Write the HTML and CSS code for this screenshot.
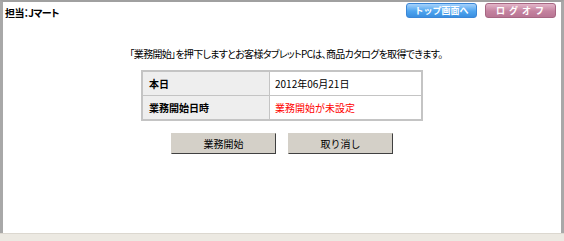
FILE: index.html
```html
<!DOCTYPE html>
<html>
  <head>
    <title>業務開始</title>
    <link rel="stylesheet" href="styles.css">
  </head>
  <body>
    <div class="frame">
      <div class="header">
        <div class="staff">担当：Jマート</div>
        <div class="navs">
          <a class="nav top" href="#">トップ画面へ</a>
          <a class="nav logoff" href="#">ロ グ オ フ</a>
        </div>
      </div>

      <p class="lead">「業務開始」を押下しますとお客様タブレットPCは、商品カタログを取得できます。</p>

      <table class="info">
        <tr>
          <th>本日</th>
          <td>2012年06月21日</td>
        </tr>
        <tr>
          <th>業務開始日時</th>
          <td class="warn">業務開始が未設定</td>
        </tr>
      </table>

      <div class="actions">
        <button class="btn">業務開始</button>
        <button class="btn">取り消し</button>
      </div>
    </div>
    <div class="status"></div>
  </body>
</html>
```

FILE: styles.css
```css
html, body { margin: 0; padding: 0; background: #ffffff; }
body { font: normal 10px "Noto Sans CJK JP", "Liberation Sans", sans-serif; color: #000000; width: 564px; height: 241px; overflow: hidden; }
.frame { height: 233px; box-sizing: border-box; border-top: 2px solid #a0a0a0; border-left: 3px solid #a8a8a8; border-right: 3px solid #a8a8a8; }
.status { height: 8px; box-sizing: border-box; background: #ece9e2; border-top: 1px solid #dcd8d0; }
.header { display: flex; justify-content: space-between; padding: 1px 5px 0 2px; height: 16px; }
.staff { font-weight: bold; font-size: 10px; line-height: 14px; margin-top: 3px; letter-spacing: -0.6px; font-feature-settings: "palt"; }
.navs { display: flex; gap: 8px; }
.nav { display: block; width: 69px; height: 13px; border-radius: 3px; color: #ffffff; text-decoration: none; font-size: 9px; line-height: 13px; text-align: center; font-weight: bold; }
.top { background: linear-gradient(#a6d2fb, #4ea4ef 55%, #3a8fe0); border: 1px solid #3b86d6; }
.logoff { background: linear-gradient(#e3b6c9, #c4829f 55%, #b87593); border: 1px solid #a66682; letter-spacing: 1px; }
.lead { margin: 28px 0 0 0; padding-left: 8px; line-height: 14px; text-align: center; font-feature-settings: "palt"; letter-spacing: -0.7px; }
table.info { border-collapse: collapse; margin: 9px auto 0 auto; width: 282px; border: 2px solid #c4c4c4; font: normal 10px "Noto Sans CJK JP", "Liberation Sans", sans-serif; }
.info th, .info td { border: 1px solid #c4c4c4; height: 23px; padding: 0 0 0 6px; text-align: left; }
.info th { background: #eeeeee; width: 120px; font-weight: bold; }
.info td { background: #ffffff; padding-left: 5px; }
.warn { color: #ff0000; }
.actions { display: flex; justify-content: center; gap: 12px; margin-top: 12px; }
.btn { width: 105px; height: 21px; background: #d4d0c8; border: 1px solid #d4d0c8; border-right-color: #404040; border-bottom-color: #404040; font: normal 10px "Noto Sans CJK JP", sans-serif; padding: 0; }
```
